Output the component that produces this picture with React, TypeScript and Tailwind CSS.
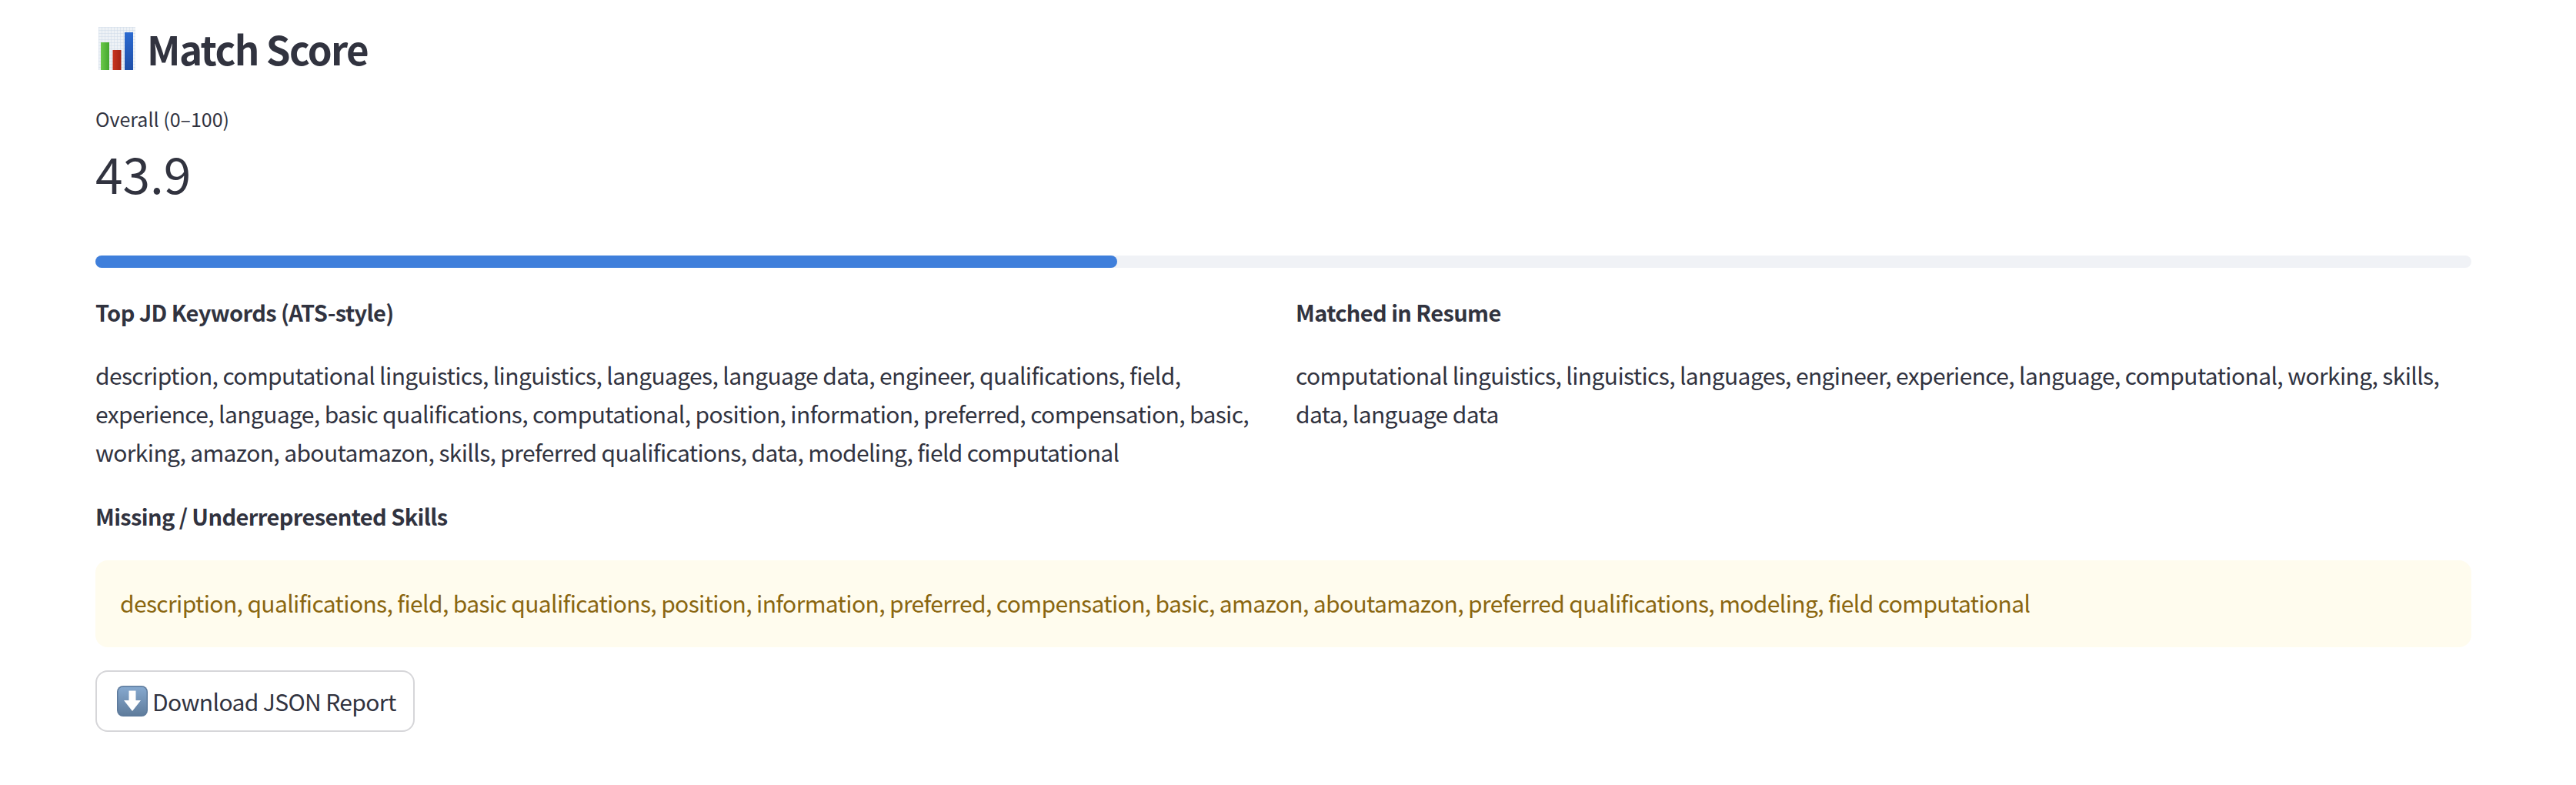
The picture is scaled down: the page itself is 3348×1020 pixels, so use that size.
import React from "react";

const fontStack = "font-['Noto_Sans_CJK_SC','Noto_Sans',sans-serif]";

function ChartEmoji() {
  return (
    <svg width="48" height="56" viewBox="0 0 48 56" className="shrink-0">
      <defs>
        <pattern id="grid" width="4" height="4" patternUnits="userSpaceOnUse">
          <rect width="4" height="4" fill="#eef2f6" />
          <path d="M4 0H0V4" fill="none" stroke="#cfdbe8" strokeWidth="1" />
        </pattern>
        <linearGradient id="green" x1="0" x2="1" y1="0" y2="0">
          <stop offset="0" stopColor="#6cc94a" />
          <stop offset="1" stopColor="#45a72e" />
        </linearGradient>
        <linearGradient id="red" x1="0" x2="1" y1="0" y2="0">
          <stop offset="0" stopColor="#c8341f" />
          <stop offset="1" stopColor="#a32314" />
        </linearGradient>
        <linearGradient id="blue" x1="0" x2="0" y1="0" y2="1">
          <stop offset="0" stopColor="#2b6ad0" />
          <stop offset="1" stopColor="#1f4fa8" />
        </linearGradient>
      </defs>
      <rect width="48" height="56" fill="url(#grid)" />
      <rect x="3" y="20" width="11" height="36" fill="url(#green)" />
      <rect x="18.5" y="30" width="11" height="26" fill="url(#red)" />
      <rect x="34" y="7" width="11" height="49" fill="url(#blue)" />
    </svg>
  );
}

function DownloadEmoji() {
  return (
    <svg width="40" height="40" viewBox="0 0 40 40" className="shrink-0">
      <defs>
        <linearGradient id="tile" x1="0" x2="0" y1="0" y2="1">
          <stop offset="0" stopColor="#86a9cf" />
          <stop offset="1" stopColor="#5f7c9c" />
        </linearGradient>
      </defs>
      <rect width="40" height="40" rx="8" fill="#5d7a9c" />
      <rect x="1.5" y="1.5" width="37" height="37" rx="6.5" fill="url(#tile)" />
      <path d="M15.5 6.5H24.5V19H31L20 33L9 19H15.5Z" fill="#fff" />
    </svg>
  );
}

export default function App() {
  return (
    <div className={`min-h-[1020px] bg-white pl-[124px] pr-[136px] pt-[28px] text-[#31333f] ${fontStack}`}>
      <h3 className="flex h-[70px] items-center gap-[15px] text-[51px] font-semibold leading-[70px] tracking-[-1.6px]">
        <span className="pl-[4px]">
          <ChartEmoji />
        </span>
        Match Score
      </h3>
      <div className="mt-[36px] text-[25px] leading-[40px]">Overall (0–100)</div>
      <div className="mt-[2px] text-[64px] leading-[96px]">43.9</div>

      <div className="mt-[60px] h-[16px] w-full rounded-[8px] bg-[#f0f2f6]">
        <div className="h-[16px] w-[43%] rounded-[8px] bg-[#3f7fdb]" />
      </div>

      <div className="mt-[32px] grid grid-cols-2 gap-[32px] text-[30px] leading-[50px] tracking-[-0.63px]">
        <div>
          <div className="text-[29px] font-semibold tracking-[-0.6px]">Top JD Keywords (ATS-style)</div>
          <p className="mt-[32px]">
            description, computational linguistics, linguistics, languages, language data, engineer, qualifications, field, experience, language, basic qualifications, computational, position, information, preferred, compensation, basic, working, amazon, aboutamazon, skills, preferred qualifications, data, modeling, field computational
          </p>
        </div>
        <div>
          <div className="text-[29px] font-semibold tracking-[-0.6px]">Matched in Resume</div>
          <p className="mt-[32px]">
            computational linguistics, linguistics, languages, engineer, experience, language, computational, working, skills, data, language data
          </p>
        </div>
      </div>

      <div className="mt-[33px] text-[29px] font-semibold leading-[50px] tracking-[-0.6px]">Missing / Underrepresented Skills</div>

      <div className="mt-[33px] flex h-[113px] items-center rounded-[16px] bg-[#fffcee] px-[32px] pb-[4px] text-[30px] leading-[50px] tracking-[-0.63px] text-[#8a6610]">
        description, qualifications, field, basic qualifications, position, information, preferred, compensation, basic, amazon, aboutamazon, preferred qualifications, modeling, field computational
      </div>

      <button className="mt-[30px] flex h-[80px] items-center gap-[6px] rounded-[16px] border-2 border-[#d6d6d9] bg-white pl-[26px] pr-[22px] text-[30px] leading-[50px] tracking-[-0.63px]">
        <DownloadEmoji />
        Download JSON Report
      </button>
    </div>
  );
}
